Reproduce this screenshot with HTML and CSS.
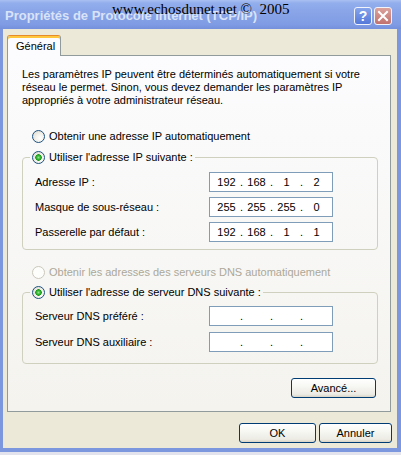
FILE: index.html
```html
<!DOCTYPE html>
<html lang="fr">
<head>
<meta charset="utf-8">
<title>Propriétés de Protocole Internet (TCP/IP)</title>
<link rel="stylesheet" href="styles.css">
</head>
<body>
<div class="window">
  <div class="titlebar">
    <span class="title">Propriétés de Protocole Internet (TCP/IP)</span>
    <span class="watermark">www.echosdunet.net ©&nbsp; 2005</span>
    <div class="tb-buttons">
      <span class="tb-btn help">?</span>
      <span class="tb-btn close"><svg width="12" height="12" viewBox="0 0 12 12"><path d="M2 2 L10 10 M10 2 L2 10" stroke="#fff" stroke-width="2" stroke-linecap="square"/></svg></span>
    </div>
  </div>
  <div class="frame">
    <div class="tabs"><div class="tab">Général</div></div>
    <div class="panel">
      <p class="desc">Les paramètres IP peuvent être déterminés automatiquement si votre<br>réseau le permet. Sinon, vous devez demander les paramètres IP<br>appropriés à votre administrateur réseau.</p>
      <div class="radio radio-first"><span class="rb"></span>Obtenir une adresse IP automatiquement</div>
      <fieldset class="group group-ip">
        <legend><span class="radio"><span class="rb checked"></span>Utiliser l'adresse IP suivante :</span></legend>
        <div class="rows">
          <div class="row"><span class="lbl">Adresse IP :</span><span class="ip"><span class="oct">192</span><span class="dot">.</span><span class="oct">168</span><span class="dot">.</span><span class="oct">1</span><span class="dot">.</span><span class="oct">2</span></span></div>
          <div class="row"><span class="lbl">Masque de sous-réseau :</span><span class="ip"><span class="oct">255</span><span class="dot">.</span><span class="oct">255</span><span class="dot">.</span><span class="oct">255</span><span class="dot">.</span><span class="oct">0</span></span></div>
          <div class="row"><span class="lbl">Passerelle par défaut :</span><span class="ip"><span class="oct">192</span><span class="dot">.</span><span class="oct">168</span><span class="dot">.</span><span class="oct">1</span><span class="dot">.</span><span class="oct">1</span></span></div>
        </div>
      </fieldset>
      <div class="radio disabled radio-dns-auto"><span class="rb"></span>Obtenir les adresses des serveurs DNS automatiquement</div>
      <fieldset class="group group-dns">
        <legend><span class="radio"><span class="rb checked"></span>Utiliser l'adresse de serveur DNS suivante :</span></legend>
        <div class="rows rows-dns">
          <div class="row"><span class="lbl">Serveur DNS préféré :</span><span class="ip"><span class="oct"></span><span class="dot">.</span><span class="oct"></span><span class="dot">.</span><span class="oct"></span><span class="dot">.</span><span class="oct"></span></span></div>
          <div class="row"><span class="lbl">Serveur DNS auxiliaire :</span><span class="ip"><span class="oct"></span><span class="dot">.</span><span class="oct"></span><span class="dot">.</span><span class="oct"></span><span class="dot">.</span><span class="oct"></span></span></div>
        </div>
      </fieldset>
      <div class="adv-row"><button class="btn btn-adv">Avancé...</button></div>
    </div>
    <div class="footer">
      <button class="btn btn-ok">OK</button>
      <button class="btn btn-cancel">Annuler</button>
    </div>
  </div>
</div>
</body>
</html>
```
FILE: styles.css
```css
body {
  margin: 0;
  background: #e2e3ec;
  font-family: "Liberation Sans", Arial, sans-serif;
  font-size: 11px;
  color: #000;
}

.window {
  width: 401px;
}

.titlebar {
  position: relative;
  height: 29px;
  box-sizing: border-box;
  padding: 2px 9px 0 5px;
  display: flex;
  align-items: center;
  background: linear-gradient(#a9c0f1 0, #93aeec 3px, #8aa5e8 40%, #7f9be3 85%, #7590dc 100%);
}

.title {
  font-weight: bold;
  font-size: 13px;
  color: #d9e3f7;
  white-space: nowrap;
}

.watermark {
  position: absolute;
  left: 112px;
  top: 1px;
  font-family: "Liberation Serif", "Times New Roman", serif;
  font-size: 15px;
  color: #000;
  white-space: nowrap;
}

.tb-buttons {
  margin-left: auto;
  display: flex;
  gap: 2px;
}

.tb-btn {
  width: 18px;
  height: 18px;
  box-sizing: border-box;
  border: 1px solid #f2f4fb;
  border-radius: 3px;
  display: flex;
  align-items: center;
  justify-content: center;
}

.help {
  background: linear-gradient(#86a4ec, #5479d9);
  color: #fff;
  font-weight: bold;
  font-size: 14px;
}

.close {
  background: linear-gradient(#dba29c, #c2726e);
}

.frame {
  border: solid #7d97df;
  border-width: 0 4px 4px 3px;
  background: #ece9d8;
  padding: 6px 6px 5px 4px;
}

.tabs {
  display: flex;
  position: relative;
  z-index: 1;
  margin-bottom: -1px;
}

.tab {
  width: 54px;
  height: 21px;
  box-sizing: border-box;
  border: 1px solid #919b9c;
  border-top: 1px solid #e68b2c;
  border-bottom: none;
  border-radius: 3px 3px 0 0;
  box-shadow: inset 0 2px #ffc83c;
  background: #fcfcfe;
  padding: 4px 0 0 8px;
}

.panel {
  height: 357px;
  box-sizing: border-box;
  border: 1px solid #919b9c;
  background: linear-gradient(#fcfcfe, #f4f3ee);
  padding: 12px 12px 0 14px;
}

.desc {
  margin: 0;
  line-height: 13px;
}

.radio {
  display: flex;
  align-items: center;
  height: 16px;
  gap: 4px;
  white-space: nowrap;
}

.radio-first {
  margin: 21px 0 0 10px;
}

.rb {
  width: 13px;
  height: 13px;
  box-sizing: border-box;
  border: 1px solid #1c5180;
  border-radius: 50%;
  background: radial-gradient(circle at 65% 65%, #ffffff 0, #f3f2ec 40%, #d9d6c9 100%);
  flex: none;
}

.rb.checked {
  background:
    radial-gradient(circle at 50% 50%, #8fe38f 0, #2fb32f 2px, #1b9a1b 3px, transparent 3.5px),
    radial-gradient(circle at 65% 65%, #ffffff 0, #f3f2ec 40%, #d9d6c9 100%);
}

.disabled {
  color: #aca899;
}

.disabled .rb {
  border-color: #cac8bb;
  background: #fdfdfb;
}

.radio-dns-auto {
  margin: 14px 0 0 10px;
}

.group {
  margin: 5px 0 0;
  padding: 0;
  min-width: 0;
  border: 1px solid #d0d0bf;
  border-radius: 4px;
}

.group-dns {
  margin-top: 4px;
}

.group legend {
  margin-left: 7px;
  padding: 0 2px;
}

.rows {
  padding: 7px 0 7px 12px;
}

.rows-dns {
  padding: 6px 0 11px 12px;
}

.row {
  display: flex;
  align-items: center;
  height: 20px;
}

.row + .row {
  margin-top: 5px;
}

.rows-dns .row + .row {
  margin-top: 6px;
}

.lbl {
  width: 174px;
  flex: none;
}

.ip {
  width: 124px;
  height: 20px;
  box-sizing: border-box;
  border: 1px solid #7f9db9;
  background: #fff;
  display: flex;
  padding-left: 3px;
  line-height: 18px;
}

.oct {
  width: 27px;
  text-align: center;
}

.dot {
  width: 3px;
  text-align: center;
}

.adv-row {
  display: flex;
  justify-content: flex-end;
  margin-top: 14px;
  padding-right: 2px;
}

.btn {
  height: 20px;
  box-sizing: border-box;
  border: 1px solid #003c74;
  border-radius: 3px;
  background: linear-gradient(#ffffff 0, #f7f7f3 40%, #ecebe4 85%, #d8d3c6 100%);
  font-family: "Liberation Sans", Arial, sans-serif;
  font-size: 11px;
  color: #000;
  padding: 0;
}

.btn-adv {
  width: 85px;
}

.footer {
  display: flex;
  justify-content: flex-end;
  gap: 3px;
  margin-top: 11px;
  margin-right: -1px;
}

.btn-ok {
  width: 77px;
}

.btn-cancel {
  width: 73px;
}
```
